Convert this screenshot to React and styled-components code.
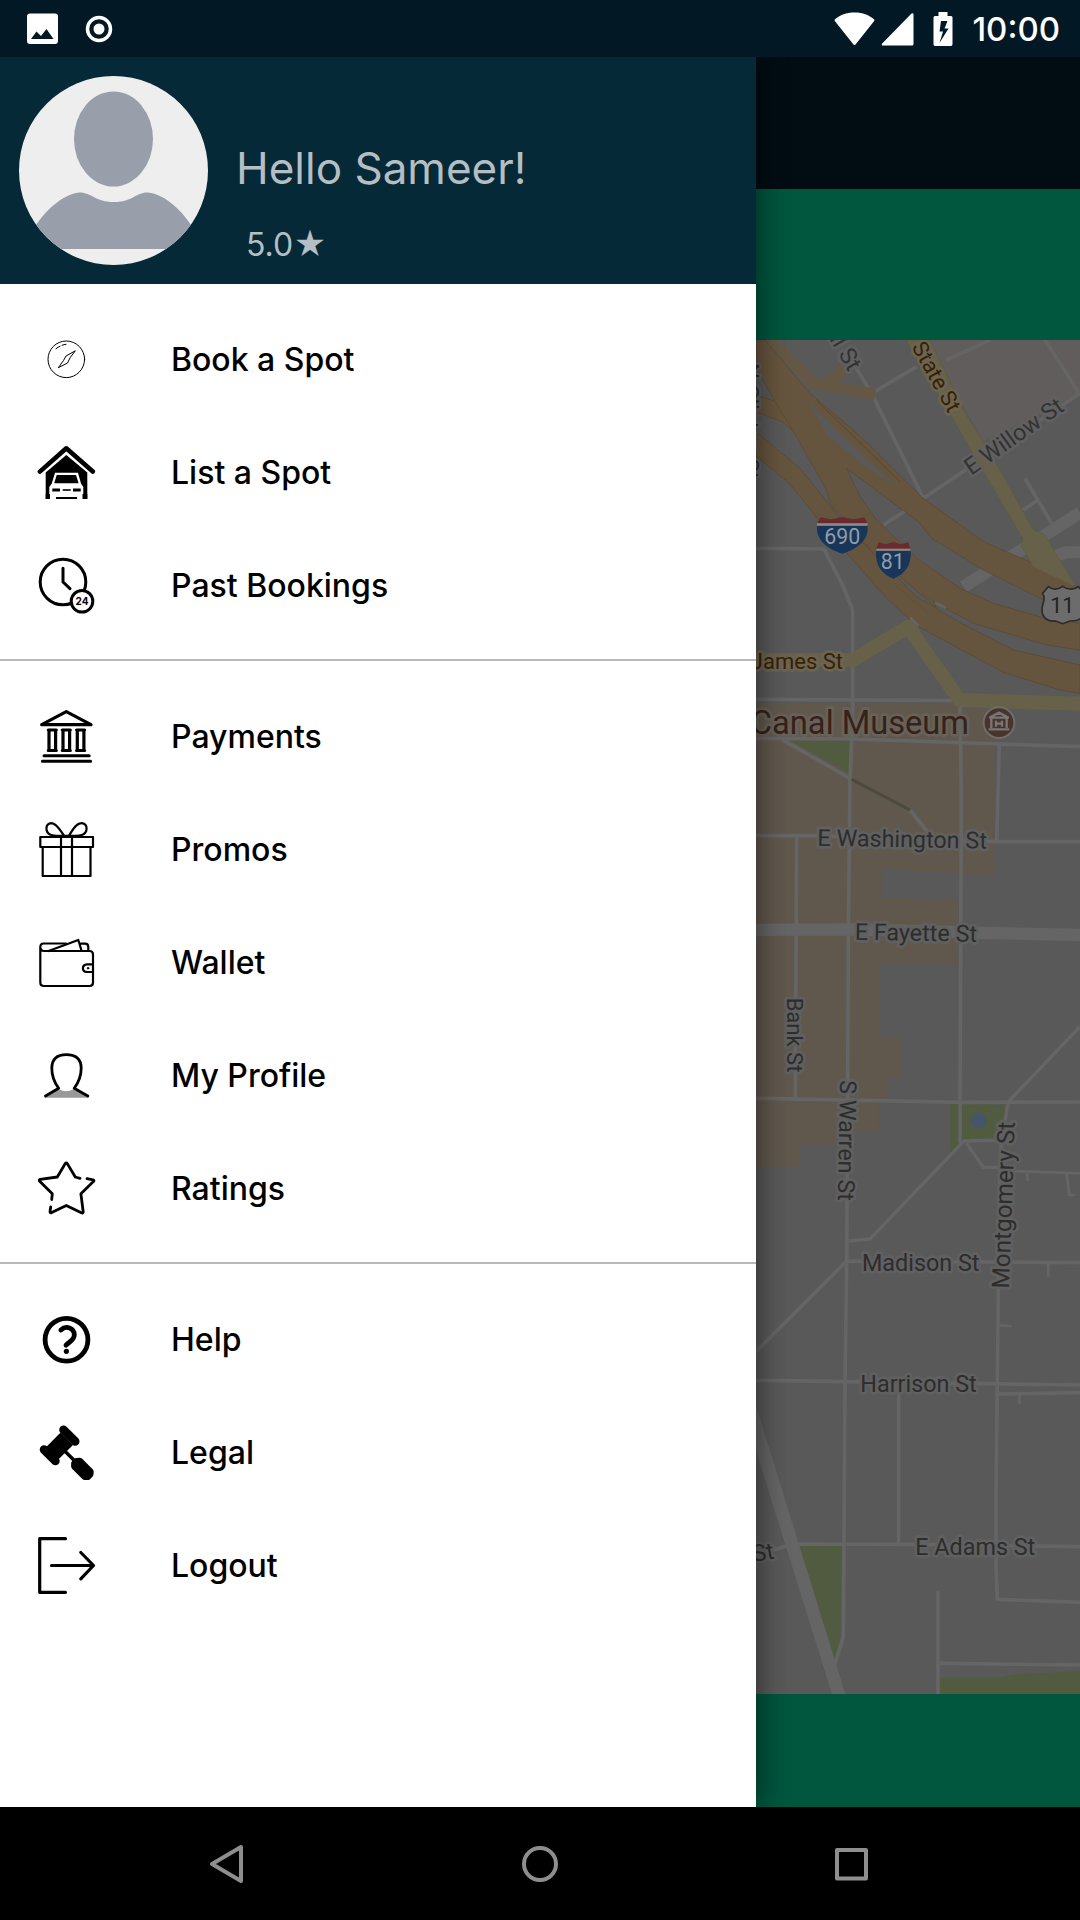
import React from "react";
import styled, { createGlobalStyle } from "styled-components";

const GlobalStyle = createGlobalStyle`
  *, *::before, *::after { box-sizing: border-box; }
  body { margin: 0; background: #000; font-family: Inter, Roboto, "Liberation Sans", sans-serif; }
`;

const Screen = styled.div`
  min-height: 100vh;
  display: flex;
  flex-direction: column;
`;

const StatusBar = styled.header`
  height: 57px;
  flex: none;
  display: flex;
  align-items: center;
  justify-content: space-between;
  padding: 0 20px 0 24px;
  background: #021825;
  color: #fff;
`;

const StatusGroup = styled.div`
  display: flex;
  align-items: center;
  gap: ${(p) => p.$gap}px;
`;

const Clock = styled.time`
  font-size: 33px;
  line-height: 40px;
  font-weight: 500;
  margin-left: 4px;
`;

const Stage = styled.div`
  flex: 1;
  display: grid;
  overflow: hidden;
`;

const HomePage = styled.main`
  grid-area: 1 / 1;
  display: flex;
  flex-direction: column;
  min-width: 0;
`;

const Band = styled.div`
  flex: none;
  height: ${(p) => p.$height}px;
  background: ${(p) => p.$color};
`;

const MapArea = styled.div`
  flex: 1;
  min-height: 0;
  background: #595959;

  svg { display: block; width: 100%; height: 100%; }
`;

const Drawer = styled.aside`
  grid-area: 1 / 1;
  width: 70%;
  z-index: 1;
  background: #fff;
  box-shadow: 4px 0 26px rgba(0, 0, 0, 0.45);
`;

const ProfileHeader = styled.div`
  display: flex;
  gap: 28px;
  padding: 19px;
  height: 227px;
  background: #052937;
  color: #b4bec3;
`;

const Avatar = styled.svg`
  width: 189px;
  height: 189px;
  flex: none;
  border-radius: 50%;
  background: #eee;
`;

const ProfileText = styled.div`
  display: flex;
  flex-direction: column;
  justify-content: flex-end;
  gap: 31px;
`;

const Greeting = styled.h1`
  margin: 0;
  font-size: 44px;
  line-height: 52px;
  font-weight: 400;
`;

const Score = styled.p`
  margin: 0;
  padding-left: 10px;
  font-size: 32px;
  line-height: 40px;
  font-weight: 400;
`;

const MenuGroup = styled.ul`
  list-style: none;
  margin: 0;
  padding: 19px 0 17px;

  & + & { border-top: 2px solid #b9b9b9; }
`;

const MenuLink = styled.a`
  display: flex;
  align-items: center;
  gap: 75px;
  height: 113px;
  padding-left: 36px;
  color: #000;
  font-size: 32px;
  line-height: 40px;
  font-weight: 500;
  text-decoration: none;
`;

const MenuIcon = styled.svg`
  width: 60px;
  height: 60px;
  flex: none;
  fill: none;
  stroke: #000;
  stroke-linecap: round;
  stroke-linejoin: round;
`;

const SystemNav = styled.nav`
  flex: none;
  height: 113px;
  display: grid;
  grid-template-columns: repeat(3, 1fr);
  padding: 0 72px;
  background: #000;
`;

const SystemButton = styled.button`
  display: flex;
  align-items: center;
  justify-content: center;
  border: 0;
  padding: 0;
  background: none;

  svg {
    width: 44px;
    height: 44px;
    fill: none;
    stroke: #8e8e8e;
    stroke-width: 4;
    stroke-linejoin: round;
  }
`;

const CompassIcon = () => (
  <MenuIcon viewBox="0 0 60 60" strokeWidth="1">
    <circle cx="30.3" cy="29.3" r="18.3" />
    <path d="M39 21 30 26 27.5 30.5 22.3 37.7 31.5 33 34 28Z" />
    <path d="M20 18.7Q22 17 24 16.3M26 15.3Q28 14.4 30 14.3" />
  </MenuIcon>
);

const GarageIcon = () => (
  <MenuIcon viewBox="0 0 60 60">
    <path d="M3.9 28.6 30.3 5.3 56.8 28.6" strokeWidth="4.6" />
    <path d="M30.3 12 51.3 29.5V56H9.7V29.5Z" fill="#000" stroke="none" />
    <path d="M19 29.7H42L45 40.5 47.3 44V51H46.5V57H14V51H13.3V44L15.8 40.5Z" fill="#fff" stroke="none" />
    <path d="M20.7 32H40L42.6 40.3H18.2Z" fill="#000" stroke="none" />
    <path d="M9.7 51H13.8V56H9.7ZM47 51H51.3V56H47Z" fill="#000" stroke="none" />
    <path d="M16.3 47H24M37 47H44.7" strokeWidth="3" strokeLinecap="butt" />
    <path d="M26.7 47H34.7" strokeWidth="1.6" strokeLinecap="butt" />
    <path d="M20 55H41" strokeWidth="2" strokeLinecap="butt" />
  </MenuIcon>
);

const HistoryIcon = () => (
  <MenuIcon viewBox="0 0 60 60" strokeWidth="3">
    <circle cx="27" cy="26" r="22.8" />
    <path d="M27 12.3V26L34 32.7" />
    <circle cx="46" cy="45.3" r="10.8" fill="#fff" />
    <text x="46" y="49" textAnchor="middle" fontSize="10" fontWeight="700" fill="#000" stroke="none">24</text>
  </MenuIcon>
);

const BankIcon = () => (
  <MenuIcon viewBox="0 0 60 60" strokeWidth="3.2">
    <path d="M30.3 4.7 55 17.7H5.7Z" />
    {[16.3, 30.3, 44.6].map((x) => (
      <path key={x} d={`M${x - 4} 23H${x + 4}M${x - 4} 43.5H${x + 4}M${x - 3.3} 23V43.5M${x + 3.3} 23V43.5`} />
    ))}
    <path d="M8 48.7H53.2M6.4 54.3H54.6" strokeWidth="3" />
  </MenuIcon>
);

const GiftIcon = () => (
  <MenuIcon viewBox="0 0 60 60" strokeWidth="2.2" strokeLinejoin="miter">
    <path d="M4.3 17H57V27H4.3ZM6.7 27V56H54.5V27M25 17V56M36 17V56" />
    <path d="M28 15.5C25 12 21 3.2 15 3.2C9 4 9 12 14.5 14.8Q18 16 22 15.8H38Q43 16 46.5 14.8C52 12 52 4 46 3.2C39 3 36 12 33 15.5" />
  </MenuIcon>
);

const WalletIcon = () => (
  <MenuIcon viewBox="0 0 60 60" strokeWidth="2.2">
    <path d="M4.3 14V49.5Q4.3 53 8 53H53.5Q57 53 57 49.5V21.5Q57 18 53.5 18H8Q4.3 17.8 4.3 14T8 10.5H30" />
    <path d="M12.5 18 42.3 7 45.5 17.5M45 10.7H49Q52.3 10.7 52.3 14V17.5" />
    <path d="M56.5 31.3H51Q46.9 31.8 46.9 35.2T51 39H56.5" />
    <circle cx="52" cy="35.2" r="0.8" fill="#000" strokeWidth="1" />
  </MenuIcon>
);

const ProfileIcon = () => (
  <MenuIcon viewBox="0 0 60 60" strokeWidth="2.8">
    <path d="M8.5 51.7 22 43Q30 47 38.5 43L53 51.7Z" fill="#999" stroke="none" />
    <path d="M23 42Q30.3 48.5 38 42L41 34H20Z" fill="#fff" stroke="none" />
    <path d="M9.5 50 22.7 42.3C17.5 35.5 15.8 29.5 15.8 22C16 13 20.5 8.6 30.3 8.6S45 13 45.2 22C45.2 29.5 43.3 35.5 38.2 42.3L51.8 50" />
  </MenuIcon>
);

const StarIcon = () => (
  <MenuIcon viewBox="0 0 60 60" strokeWidth="2.8">
    <path d="M44 19.3 39.3 18 31.3 4.6Q30.3 3 29.3 4.6L21.3 18 4.2 20.3Q2.7 21 3.7 22.3L16.3 34.7 15.7 40.5" />
    <path d="M51 19.7 57 20.8Q58.7 21.5 57.4 22.6L44.9 34.7 47.2 52.8Q47 54.6 45.3 53.8L30.3 46.4 15.7 53.6Q13.8 54.2 14 52.5L14.7 48" />
  </MenuIcon>
);

const HelpIcon = () => (
  <MenuIcon viewBox="0 0 60 60" strokeWidth="4.8">
    <circle cx="30.5" cy="29.7" r="21.4" />
    <path d="M24.9 20C30 15 38.3 18 38.3 25C38.3 30 33.5 31.5 30 35.2" />
    <circle cx="30.4" cy="41.3" r="2.6" fill="#000" stroke="none" />
  </MenuIcon>
);

const GavelIcon = () => (
  <MenuIcon viewBox="0 0 60 60">
    <path d="M27.5 6.7 39.2 18.4M8 26.6 19.4 38" strokeWidth="8.6" />
    <path d="M24.6 9.5 37 22 22.6 36.3 10.2 24Z" fill="#000" stroke="none" />
    <path d="M29 28.3 40 39.3" strokeWidth="3.4" />
    <path d="M40.5 38.4 43.7 38.2 54.2 48.7 54 51.3 51.6 53.6 48.8 53.6 38.6 43.3 38.6 40.5Z" fill="#000" strokeWidth="7" />
  </MenuIcon>
);

const LogoutIcon = () => (
  <MenuIcon viewBox="0 0 60 60" strokeWidth="3.2">
    <path d="M29.5 2.7H3.7V56.3H29.5" />
    <path d="M15.5 29.5H57.5M44.8 16.5 57.5 29.5 44.8 42.8" />
  </MenuIcon>
);

const MENU = [
  [
    ["Book a Spot", CompassIcon],
    ["List a Spot", GarageIcon],
    ["Past Bookings", HistoryIcon],
  ],
  [
    ["Payments", BankIcon],
    ["Promos", GiftIcon],
    ["Wallet", WalletIcon],
    ["My Profile", ProfileIcon],
    ["Ratings", StarIcon],
  ],
  [
    ["Help", HelpIcon],
    ["Legal", GavelIcon],
    ["Logout", LogoutIcon],
  ],
];

const MapLabel = styled.text`
  font-family: Roboto, "Liberation Sans", sans-serif;
  font-size: ${(p) => p.$size || 70}px;
  fill: ${(p) => p.$color || "#2d2d2d"};
  stroke: ${(p) => p.$halo || "#606060"};
  stroke-width: 16px;
  stroke-linejoin: round;
  paint-order: stroke;
`;

const ShieldText = styled.text`
  font-family: Roboto, "Liberation Sans", sans-serif;
  font-size: 64px;
  text-anchor: middle;
  fill: ${(p) => p.$color};
`;

const CityMap = () => (
  <svg viewBox="-2250 30 3240 4062" preserveAspectRatio="xMaxYMin slice" role="img" aria-label="City map">
    <path fill="#625d5d" d="M530 30H990V190L700 335Z" />
    <path
      fill="#60584d"
      d="M-2250 1122H635V1140H735L732 1635 640 1632 392 1617V1703L625 1710V1905L390 1900 388 2122 454 2125V2243H414V2312H388V2405H258V2445H150V2510H-2250Z"
    />
    <g fill="#505b40">
      <path d="M118 1230H300L298 1330Z" />
      <path d="M600 2320 768 2325 755 2425 645 2432 600 2475Z" />
      <path d="M148 3648H276L270 3930 258 4000Z" />
      <path d="M570 4043H750L800 4033 990 4024V4092H570Z" />
    </g>
    <path fill="#45566b" d="M687 2346 704 2354 711 2371 704 2389 687 2397 670 2390 662 2371 671 2354Z" />

    <g fill="none" stroke="#656565" strokeWidth="11" strokeLinejoin="round">
      <path d="M310 100 365 190 520 505 990 190M365 190 500 110M590 90 720 30M885 30 985 185" />
      <path d="M18 655 222 657 280 770 308 840V1150L300 1350 295 1820 293 2300 290 2800 285 3160 280 3920 252 4010" />
      <path d="M18 1108 640 1112M820 540 860 512M825 445 905 580M400 585 465 543" />
      <path d="M18 1225 310 1227 750 1242 990 1250M90 1225 300 1345M480 1440 540 1515" />
      <path d="M18 1517H200L740 1535H990M140 1517 136 2300M748 1245 740 1535" />
      <path d="M630 1130 634 1400 630 2310V2440" />
      <path d="M18 2305 380 2312 640 2317 990 2316M990 2090 775 2315 755 2428 750 2500 745 2880 738 3500V3700L742 3808 990 3817" />
      <path d="M755 2430 642 2433 360 2727 295 2733M650 2440 700 2512H750" strokeWidth="10" />
      <path d="M750 2522 990 2530M832 2528V2552M950 2530 958 2595H976M895 2800V2840M750 2986 785 2988" strokeWidth="8" />
      <path d="M18 3065 290 2793 990 2798" />
      <path d="M18 3151 990 3165M745 3192 990 3188M446 3170V3640" />
      <path d="M808 3190V3222" strokeWidth="8" />
      <path d="M70 3660 130 3642 500 3643 990 3650M564 3782V4092M570 4000 990 4005" />
      <path d="M18 1800 300 1798 680 1808 990 1815M990 548 870 625 640 770" strokeWidth="37" />
      <path d="M990 667H950L860 695" strokeWidth="36" />
    </g>
    <path fill="#656565" d="M18 3228 286 4092H246L18 3362Z" />
    <path d="M305 1348 480 1440" stroke="#4b4a3d" strokeWidth="9" />

    <g stroke="#645845" strokeWidth="34" fill="none">
      <path d="M50 20 190 160 375 193M225 158 265 138 292 95" />
    </g>
    <g fill="#66553e" stroke="#5a4730" strokeWidth="2">
      <path d="M18 195 80 215 140 310 95 275 18 245Z" />
      <path d="M18 305 150 415 270 565 350 650 500 800 620 872 790 960 990 1005V1090L930 1080 760 1027 500 887 410 805 300 680 200 562 120 462 18 378Z" />
      <path d="M18 30H45L180 190 330 318 520 505 700 635 860 705 990 775V855L880 810 700 720 545 625 505 575 290 415 330 500 380 570 500 685 630 775 730 820 870 860 990 880V960L890 945 670 880 550 815 560 835 370 670 240 520 230 480 125 295 75 215 18 110Z" />
    </g>
    <path fill="#595959" d="M173 213 435 470 350 412 235 320Z" />
    <path d="M200 212 450 455" stroke="#5a4730" strokeWidth="3" />
    <path d="M435 765 535 850M515 790 585 832" stroke="#5f5340" strokeWidth="4" />
    <path d="M480 862 505 888M555 818 588 834" stroke="#656565" strokeWidth="8" />

    <path fill="#686149" stroke="#5f5a3e" strokeWidth="2" d="M468 30H540L640 240 750 420 850 600 885 615 978 772 850 710 815 650 818 625 605 260Z" />
    <path fill="none" stroke="#686149" strokeWidth="42" strokeLinejoin="round" d="M-100 990H308L475 890 628 1110 990 1121" />

    <path fill="#6a2b30" d="M211 562 243 568 277 561 311 568 343 562 353 580H201Z" />
    <path fill="#17365a" d="M201 587H353C356 630 325 655 277 671C229 655 198 630 201 587Z" />
    <path fill="#8d8a87" d="M201 580H353V587H201Z" />
    <ShieldText x="277" y="642" $color="#929ca8">690</ShieldText>
    <path fill="#6a2b30" d="M386 637 408 643 430 636 452 643 475 637 481 656H379Z" />
    <path fill="#17365a" d="M378 662H482C485 705 465 732 430 746C395 732 375 705 378 662Z" />
    <path fill="#8d8a87" d="M379 656H481V662H379Z" />
    <ShieldText x="428" y="718" $color="#929ca8">81</ShieldText>
    <path
      fill="#6c6c6c"
      stroke="#2b2b2b"
      strokeWidth="5"
      d="M895 770Q917 785 938 769Q960 785 985 770L1003 790C990 812 1005 825 1003 845C1000 868 980 874 960 873L938 881 917 873C895 876 877 865 876 840C875 820 890 810 878 790Z"
    />
    <ShieldText x="937" y="850" $color="#222">11</ShieldText>

    <circle cx="747" cy="1178" r="46" fill="#4a332b" stroke="#6d6d6d" strokeWidth="6" />
    <path fill="none" stroke="#777" strokeWidth="7" d="M716 1198H778M724 1194V1164M770 1194V1164M718 1163 747 1148 776 1163ZM738 1190V1172M756 1190V1172M738 1181H756" />

    <MapLabel transform="translate(-22 100) rotate(90)" $size={66}>N Clinton St</MapLabel>
    <MapLabel transform="translate(296 127) rotate(60)" textAnchor="end" $color="#333">ll St</MapLabel>
    <MapLabel transform="translate(484 50) rotate(61)" $size={66} $color="#3b2004" $halo="#6a6552">State St</MapLabel>
    <MapLabel transform="translate(664 437) rotate(-35)" $color="#333">E Willow St</MapLabel>
    <MapLabel x="279" y="1016" textAnchor="end" $size={66} $color="#3b2004" $halo="#6a6552">James St</MapLabel>
    <MapLabel x="657" y="1211" textAnchor="end" $size={98} $color="#35221a" $halo="#686159">Erie Canal Museum</MapLabel>
    <MapLabel transform="translate(202 1547) rotate(1)">E Washington St</MapLabel>
    <MapLabel transform="translate(314 1829) rotate(1)">E Fayette St</MapLabel>
    <MapLabel transform="translate(112 2003) rotate(90)" $size={66}>Bank St</MapLabel>
    <MapLabel transform="translate(270 2250) rotate(91)">S Warren St</MapLabel>
    <MapLabel transform="translate(777 2876) rotate(-88)" $size={73}>Montgomery St</MapLabel>
    <MapLabel x="336" y="2823">Madison St</MapLabel>
    <MapLabel x="331" y="3185">Harrison St</MapLabel>
    <MapLabel x="496" y="3675">E Adams St</MapLabel>
    <MapLabel transform="translate(75 3685) rotate(-10)" textAnchor="end">St</MapLabel>
  </svg>
);

export default function App() {
  return (
    <Screen>
      <GlobalStyle />
      <StatusBar>
        <StatusGroup $gap={22}>
          <svg width="37" height="37" viewBox="0 0 37 37" aria-hidden="true">
            <path
              fill="#fff"
              fillRule="evenodd"
              d="M6 3.5H31Q34 3.5 34 6.5V31Q34 34 31 34H6Q3 34 3 31V6.5Q3 3.5 6 3.5ZM7 29H29.5L22.5 19 17 26 12.5 21.5Z"
            />
          </svg>
          <svg width="32" height="32" viewBox="0 0 32 32" aria-hidden="true">
            <circle cx="16" cy="16" r="11.5" fill="none" stroke="#fff" strokeWidth="3.5" />
            <circle cx="16" cy="16" r="5.5" fill="#fff" />
          </svg>
        </StatusGroup>
        <StatusGroup $gap={6}>
          <svg width="41" height="34" viewBox="0 0 41 34" aria-hidden="true">
            <path fill="#fff" d="M20.5 0.5C29 0.5 35 3 40 7.2Q41 8 40 9.2L21.5 32.5Q20.5 33.5 19.5 32.5L1 9.2Q0 8 1 7.2C6 3 12 0.5 20.5 0.5Z" />
          </svg>
          <svg width="33" height="34" viewBox="0 0 33 34" aria-hidden="true">
            <path fill="#fff" d="M32.5 2.5V32Q32.5 33.5 31 33.5H2Q0 33.5 1.2 31.5L30.5 1.5Q32.5 0.5 32.5 2.5Z" />
          </svg>
          <svg width="42" height="34" viewBox="-6 0 42 34" aria-hidden="true">
            <path
              fill="#fff"
              fillRule="evenodd"
              d="M12.5 0H21.5V4H25Q26.5 4 26.5 5.5V32Q26.5 34 25 34H9Q7.5 34 7.5 32V5.5Q7.5 4 9 4H12.5ZM15 9 13.5 19.5H17L13.5 31 22.5 16.5H18.5L21.5 9Z"
            />
          </svg>
          <Clock>10:00</Clock>
        </StatusGroup>
      </StatusBar>

      <Stage>
        <HomePage>
          <Band $height={132} $color="#010d13" />
          <Band $height={151} $color="#01563e" />
          <MapArea>
            <CityMap />
          </MapArea>
          <Band $height={113} $color="#01563e" />
        </HomePage>

        <Drawer>
          <ProfileHeader>
            <Avatar viewBox="0 0 189 189" role="img" aria-label="Profile picture">
              <g fill="#989faa">
                <ellipse cx="94.5" cy="63" rx="39.5" ry="47.5" />
                <path d="M8 165C22 135 45 118 60 116.5C72 116 76 126 95 126S117 116 129 116.5C145 118 167 135 181 165L178 173H11Z" />
              </g>
            </Avatar>
            <ProfileText>
              <Greeting>Hello Sameer!</Greeting>
              <Score>5.0★</Score>
            </ProfileText>
          </ProfileHeader>
          <nav aria-label="Main menu">
            {MENU.map((group) => (
              <MenuGroup key={group[0][0]}>
                {group.map(([label, Icon]) => (
                  <li key={label}>
                    <MenuLink href="#">
                      <Icon />
                      <span>{label}</span>
                    </MenuLink>
                  </li>
                ))}
              </MenuGroup>
            ))}
          </nav>
        </Drawer>
      </Stage>

      <SystemNav aria-label="System">
        <SystemButton aria-label="Back">
          <svg viewBox="0 0 44 44"><path d="M6 22 35 5V39Z" /></svg>
        </SystemButton>
        <SystemButton aria-label="Home">
          <svg viewBox="0 0 44 44"><circle cx="22" cy="22" r="16" /></svg>
        </SystemButton>
        <SystemButton aria-label="Recent apps">
          <svg viewBox="0 0 44 44"><path d="M7 8H36V36.5H7Z" /></svg>
        </SystemButton>
      </SystemNav>
    </Screen>
  );
}
